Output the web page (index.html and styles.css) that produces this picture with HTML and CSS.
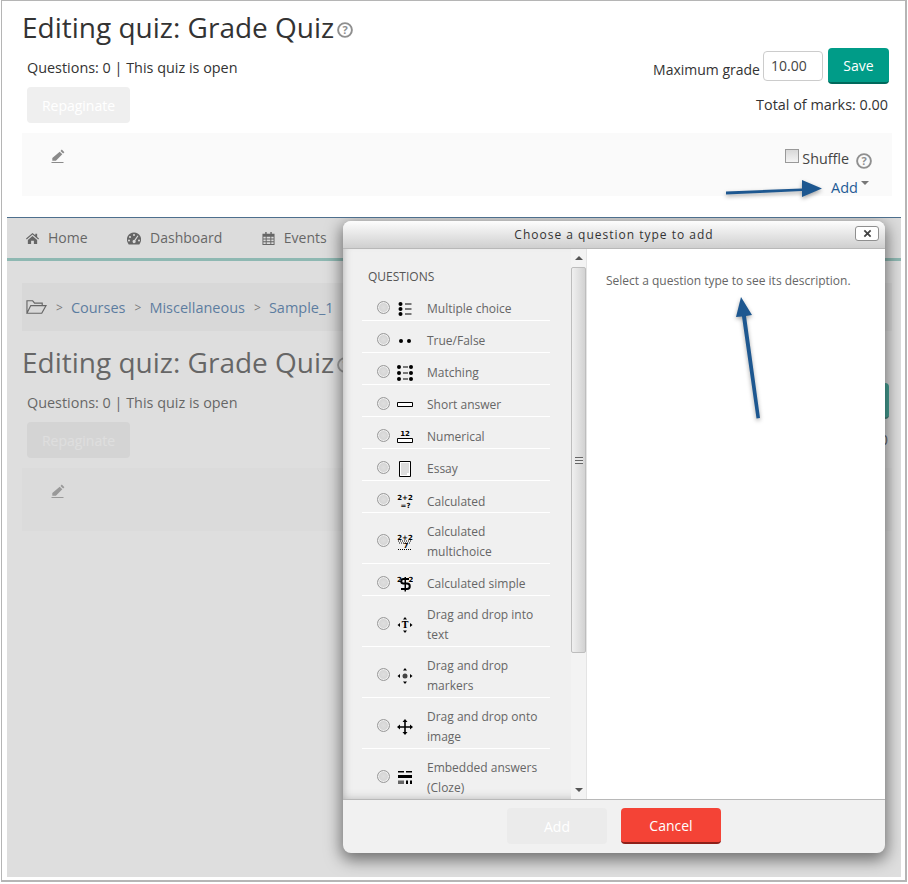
FILE: index.html
```html
<!DOCTYPE html>
<html lang="en">
<head>
    <meta charset="UTF-8"/>
    <title>Editing quiz: Grade Quiz</title>
    <link rel="stylesheet" href="styles.css">
</head>
<body>
<div class="sheet">
    <div class="top">
        <div class="quiz">
            <div class="quiz-head">
                <div class="quiz-left">
                    <h1>Editing quiz: Grade Quiz <svg class="help-big" viewBox="0 0 16 16"><circle cx="8" cy="8" r="6.900"/><text x="8" y="11.900">?</text></svg></h1>
                    <div class="status">Questions: 0 | This quiz is open</div>
                    <button class="btn btn-off repag">Repaginate</button>
                </div>
                <div class="quiz-right">
                    <div class="grade-row">
                        <span class="grade-label">Maximum grade</span>
                        <input class="grade" type="text" value="10.00">
                        <button class="btn btn-save">Save</button>
                    </div>
                    <div class="marks">Total of marks: 0.00</div>
                </div>
            </div>
            <div class="panel">
                <svg class="pencil" viewBox="0 0 14 14"><path d="M10.800.600l2.600 2.600-1.300 1.300-2.600-2.600zM8.700 2.700l2.600 2.600-6.400 6.400H1.300V9.100zM.500 13h12v1H.500z"/></svg>
                <div class="panel-right">
                    <div class="shuffle-row">
                        <input class="check" type="checkbox">
                        <span class="shuffle">Shuffle</span>
                        <svg class="help" viewBox="0 0 16 16"><circle cx="8" cy="8" r="6.900"/><text x="8" y="11.900">?</text></svg>
                    </div>
                    <div class="add-row"><a class="add-link">Add</a><span class="caret"></span></div>
                </div>
            </div>
        </div>
    </div>

    <div class="shot">
        <div class="nav">
            <span class="nav-item"><svg viewBox="0 0 14 12"><path d="M7 0L0 6l.8 1L7 1.800 13.200 7l.8-1-2-1.700V.800h-2v1.800zM2 7.500V12h3.500V8.500h3V12H12V7.500L7 3.300z"/></svg>Home</span>
            <span class="nav-item"><svg class="wide" viewBox="0 0 14 12"><path fill-rule="evenodd" d="M7 0a7 7 0 0 0-6 10.700l.7 1.300h10.600l.7-1.300A7 7 0 0 0 7 0zM7 1.500a1 1 0 1 1 0 2 1 1 0 0 1 0-2zM3 3.500a1 1 0 1 1 0 2 1 1 0 0 1 0-2zM2 7a1 1 0 1 1 0 2 1 1 0 0 1 0-2zM12 7a1 1 0 1 1 0 2 1 1 0 0 1 0-2zM10.500 3l.9.500L8.300 8.200a1.500 1.500 0 1 1-1-.6z"/></svg>Dashboard</span>
            <span class="nav-item"><svg viewBox="0 0 13 14"><path fill-rule="evenodd" d="M3 0h1.500v2h4V0H10v2h3v12H0V2h3zM1 5v2h2.500V5zM4.500 5v2h4V5zM9.500 5v2H12V5zM1 8v2h2.500V8zM4.500 8v2h4V8zM9.500 8v2H12V8zM1 11v2h2.500v-2zM4.500 11v2h4v-2zM9.500 11v2H12v-2z"/></svg>Events</span>
        </div>
        <div class="crumbs">
            <svg class="folder" viewBox="0 0 22 16"><path d="M1 14.500V1.500h6l2 2.500h8v2.500M1 14.500h15.500L21 6.500H5z"/></svg>
            <span class="sep">&gt;</span><a>Courses</a>
            <span class="sep">&gt;</span><a>Miscellaneous</a>
            <span class="sep">&gt;</span><a>Sample_1</a>
        </div>
        <div class="quiz">
            <div class="quiz-head">
                <div class="quiz-left">
                    <h1>Editing quiz: Grade Quiz <svg class="help-big" viewBox="0 0 16 16"><circle cx="8" cy="8" r="6.900"/><text x="8" y="11.900">?</text></svg></h1>
                    <div class="status">Questions: 0 | This quiz is open</div>
                    <button class="btn btn-off repag">Repaginate</button>
                </div>
                <div class="quiz-right">
                    <div class="grade-row">
                        <span class="grade-label">Maximum grade</span>
                        <input class="grade" type="text" value="10.00">
                        <button class="btn btn-save">Save</button>
                    </div>
                    <div class="marks">Total of marks: 0.00</div>
                </div>
            </div>
            <div class="panel">
                <svg class="pencil" viewBox="0 0 14 14"><path d="M10.800.600l2.600 2.600-1.300 1.300-2.600-2.600zM8.700 2.700l2.600 2.600-6.400 6.400H1.300V9.100zM.500 13h12v1H.500z"/></svg>
            </div>
        </div>
        <div class="backdrop"></div>

        <div class="modal">
            <div class="modal-title">
                <span>Choose a question type to add</span>
                <button class="close"><svg viewBox="0 0 10 10"><path d="M1.500 1.500l7 7M8.500 1.500l-7 7"/></svg></button>
            </div>
            <div class="modal-body">
                <div class="types">
                    <div class="types-label">QUESTIONS</div>
                    <label class="type"><input type="radio" name="q">
                        <svg class="qicon" viewBox="0 0 16 16"><circle cx="3.500" cy="3" r="2"/><circle cx="3.500" cy="8" r="2"/><circle cx="3.500" cy="13" r="2"/><path d="M8 2.500h6.500v1H8zM8 7.500h6.500v1H8zM8 12.500h6.500v1H8z"/></svg>
                        <span>Multiple choice</span></label>
                    <label class="type"><input type="radio" name="q">
                        <svg class="qicon" viewBox="0 0 16 16"><circle cx="4" cy="8" r="2"/><circle cx="12" cy="8" r="2"/></svg>
                        <span>True/False</span></label>
                    <label class="type"><input type="radio" name="q">
                        <svg class="qicon" viewBox="0 0 16 16"><circle cx="2" cy="2" r="2"/><circle cx="2" cy="8" r="2"/><circle cx="2" cy="14" r="2"/><circle cx="14" cy="2" r="2"/><circle cx="14" cy="8" r="2"/><circle cx="14" cy="14" r="2"/><path d="M6 1.500h5v1H6zM6 7.500h5v1H6zM6 13.500h5v1H6z"/></svg>
                        <span>Matching</span></label>
                    <label class="type"><input type="radio" name="q">
                        <svg class="qicon" viewBox="0 0 16 16"><path d="M.500 5.500h15v4H.500z" fill="#fff" stroke="#000"/></svg>
                        <span>Short answer</span></label>
                    <label class="type"><input type="radio" name="q">
                        <svg class="qicon" viewBox="0 0 16 16"><text class="tiny" x="8" y="7">12</text><path d="M.500 9.500h15v4H.500z" fill="#fff" stroke="#000"/></svg>
                        <span>Numerical</span></label>
                    <label class="type"><input type="radio" name="q">
                        <svg class="qicon" viewBox="0 0 16 16"><path d="M2.500.500h11v15h-11z" fill="#fff" stroke="#000"/><path d="M4.500 3h7M4.500 5h7M4.500 7h7M4.500 9h7M4.500 11h7M4.500 13h5" stroke="#777" stroke-dasharray="1 1"/></svg>
                        <span>Essay</span></label>
                    <label class="type low"><input type="radio" name="q">
                        <svg class="qicon" viewBox="0 0 16 16"><text class="tiny" x="8" y="6.500">2+2</text><text class="tiny" x="8.500" y="14.500">=?</text></svg>
                        <span>Calculated</span></label>
                    <label class="type"><input type="radio" name="q">
                        <svg class="qicon" viewBox="0 0 16 16"><text class="tiny" x="8" y="5.500">2+2</text><path d="M1 7h14M2 9h12M1 15.500h14" stroke="#000" stroke-dasharray="1 1"/><text class="tiny" x="9" y="14">7</text></svg>
                        <span>Calculated multichoice</span></label>
                    <label class="type"><input type="radio" name="q">
                        <svg class="qicon" viewBox="0 0 16 16"><text class="tiny" x="2.500" y="6">2</text><text class="tiny" x="14" y="6">2</text><path d="M12 3H6.500a2.200 2.200 0 0 0 0 4.500h3.500a2.700 2.700 0 0 1 0 5.500H4" fill="none" stroke="#000" stroke-width="2"/><path d="M7.500 1h1.500v14.500H7.500z"/></svg>
                        <span>Calculated simple</span></label>
                    <label class="type"><input type="radio" name="q">
                        <svg class="qicon" viewBox="0 0 16 16"><path d="M8 0l2 2.500H6zM8 16l2-2.500H6zM0.500 8l2.500-2v4zM15.500 8L13 6v4z"/><text class="tiny bold" x="8" y="11">T</text></svg>
                        <span>Drag and drop into text</span></label>
                    <label class="type"><input type="radio" name="q">
                        <svg class="qicon" viewBox="0 0 16 16"><path d="M8 0l2 2.500H6zM8 16l2-2.500H6zM0.500 8l2.500-2v4zM15.500 8L13 6v4z"/><circle cx="8" cy="8" r="2.500" fill="#444"/></svg>
                        <span>Drag and drop markers</span></label>
                    <label class="type"><input type="radio" name="q">
                        <svg class="qicon" viewBox="0 0 16 16"><path d="M7.200 3H5.500L8 0l2.500 3H8.800v4.200H13V5.500L16 8l-3 2.500V8.800H8.800V13h1.700L8 16l-2.500-3h1.700V8.800H3v1.700L0 8l3-2.500v1.700h4.200z"/></svg>
                        <span>Drag and drop onto image</span></label>
                    <label class="type"><input type="radio" name="q">
                        <svg class="qicon" viewBox="0 0 16 16"><path d="M1 1h6v1.500H1zM9 1h6v1.500H9zM1 5h14v3H1z"/><path d="M1 10.500h6v3.500H1z" fill="#666"/><path d="M9 10.500h2V14H9zM13 10.500h2V14h-2z"/></svg>
                        <span>Embedded answers (Cloze)</span></label>
                </div>
                <div class="scroll">
                    <div class="scroll-btn"><span class="arrow-up"></span></div>
                    <div class="thumb"><span class="grip"></span></div>
                    <div class="scroll-track"></div>
                    <div class="scroll-btn"><span class="arrow-down"></span></div>
                </div>
                <div class="desc">Select a question type to see its description.</div>
            </div>
            <div class="modal-foot">
                <button class="btn btn-off foot-btn">Add</button>
                <button class="btn btn-cancel foot-btn">Cancel</button>
            </div>
        </div>
    </div>
</div>

<svg class="arrows" viewBox="0 0 908 884">
    <path d="M726 191.500L802 188.500V180L822 188.500 802 197V191L726 194.500z"/>
    <path d="M760 418L756.500 418.500 742 316.500 736 317 741 297 752 315 746 316z"/>
</svg>
</body>
</html>
```
FILE: styles.css
```css
*{box-sizing: border-box; margin: 0; padding: 0}
body{position: relative; width: 908px; height: 884px; background: #fff; font-family: "Open Sans", "Liberation Sans", sans-serif; font-size: 14px; color: #333; overflow: hidden}

.sheet{margin-left: 1px; width: 906px; height: 882px; border: 1px solid #b5b5b5; border-right-width: 2px; border-bottom-width: 2px; padding: 0 4px 3px 5px; display: flex; flex-direction: column}
.top{height: 216px; flex: none}
.quiz{margin-left: 15px; width: 870px}
.quiz-head{display: flex; justify-content: space-between; height: 132px}
.quiz-left{padding-top: 7px}
h1{font-size: 28px; font-weight: 400; line-height: 38px; color: #333; white-space: nowrap}
.help-big{width: 16px; height: 16px; margin-left: -4px; vertical-align: 0}
.help-big circle, .help circle{fill: none; stroke: #8f8f8f; stroke-width: 1.900}
.help-big text, .help text{font-size: 11px; font-weight: 700; fill: #8f8f8f; text-anchor: middle}
.status{margin: 12px 0 0 5px; font-size: 14.400px; line-height: 20px; white-space: nowrap}
.btn{border: 0; border-radius: 4px; font-family: inherit; font-size: 14px; color: #fff}
.btn-off{background: #efefef}
.repag{display: block; margin: 9px 0 0 5px; width: 103px; height: 36px}

.quiz-right{padding: 47px 3px 0 0; display: flex; flex-direction: column; align-items: flex-end}
.grade-row{display: flex; align-items: flex-start}
.grade-label{margin: 12px 3px 0 0; line-height: 20px}
.grade{width: 60px; height: 30px; margin-top: 3px; border: 1px solid #ccc; border-radius: 4px; padding: 0 0 1px 7px; font-family: inherit; font-size: 14px; color: #444}
.btn-save{margin-left: 5px; width: 61px; height: 36px; background: #009c88; border-bottom: 2px solid #00695c}
.marks{margin-top: 11px; font-size: 14.400px; line-height: 20px; margin-right: 1px}

.panel{height: 63px; background: #fafafa; display: flex; justify-content: space-between; padding: 16px 20px 0 29px}
.pencil{width: 14px; height: 14px; fill: #8a8a8a}
.panel-right{display: flex; flex-direction: column; align-items: flex-end}
.shuffle-row{display: flex; align-items: flex-start; flex: none; height: 29px}
.check{appearance: none; width: 14px; height: 14px; border: 1px solid #999; background: linear-gradient(#d8d8d8, #f4f4f4)}
.shuffle{margin-left: 3px; line-height: 20px; font-size: 14.300px; color: #444}
.help{width: 16px; height: 16px; margin: 4px 0 0 7px}
.add-row{display: flex; align-items: flex-start; flex: none; padding-right: 3px}
.add-link{color: #1f5a96; line-height: 20px; font-size: 14.500px}
.caret{margin: 3px 0 0 3px; border: 4px solid transparent; border-top-color: #777; border-bottom: 0}

.shot{position: relative; height: 660px; border-top: 1px solid #4d6f8d; overflow: hidden; flex: none}
.nav{display: flex; height: 43px; background: #fbfbfb; border-bottom: 3px solid #78bfb5; padding-left: 19px; gap: 39.500px}
.nav-item{display: flex; align-items: center; gap: 9px; line-height: 40px; color: #333}
.nav-item svg{width: 13px; height: 13px; fill: #333}
.nav-item svg.wide{width: 14px}
.crumbs{display: flex; align-items: center; margin: 22px 0 5px 15px; width: 870px; height: 48px; background: #f5f5f5; padding-left: 4px; gap: 8px; font-size: 14.500px}
.folder{width: 21px; height: 16px; fill: none; stroke: #333; stroke-width: 1.200}
.crumbs a{color: #1f5a96}
.sep{color: #555; font-size: 12px; margin-left: 1px}
.backdrop{position: absolute; inset: 0; background: rgba(175, 175, 175, .41)}

.modal{position: absolute; left: 336px; top: 3px; width: 542px; height: 632px; border-radius: 8px; background: #f1f1f1; box-shadow: 0 5px 16px 2px rgba(0, 0, 0, .5); display: flex; flex-direction: column; overflow: hidden}
.modal-title{position: relative; height: 28px; flex: none; background: linear-gradient(#fdfdfd, #cfcfcf); border-bottom: 1px solid #b8b8b8; text-align: center; font-size: 12px; letter-spacing: 1px; line-height: 28px; color: #333}
.close{position: absolute; right: 6px; top: 5px; width: 24px; height: 15px; background: #fff; border: 1px solid #8f8f8f; border-radius: 3px; display: flex; align-items: center; justify-content: center}
.close svg{width: 9px; height: 9px; fill: none; stroke: #444; stroke-width: 2}

.modal-body{flex: 1; min-height: 0; display: flex; background: #fff}
.types{width: 228px; flex: none; padding: 0 0 0 19px; background: #f0f0f0; box-shadow: inset 7px 0 8px -7px #aaa, inset 0 -10px 10px -10px #bbb; overflow: hidden}
.types-label{height: 40px; padding: 18px 0 0 6px; font-size: 12px; line-height: 20px; color: #555}
.type{display: flex; align-items: center; width: 188px; min-height: 32px; padding: 9px 8px 1px 15px; border-bottom: 1px solid #fff; line-height: 20px; font-size: 12px; color: #666}
.type.low span{position: relative; top: 1px}
.type input{appearance: none; width: 13px; height: 13px; flex: none; margin: -3px -1px 0 0; border: 1px solid #999; border-radius: 50%; background: radial-gradient(#dedede, #cfcfcf); box-shadow: inset 0 0 0 1px #f0f0f0}
.qicon{width: 16px; height: 16px; flex: none; margin: 0 14px 0 8px}
.tiny{font-family: "DejaVu Sans", sans-serif; font-size: 7px; font-weight: 700; text-anchor: middle}
.bold{font-size: 9px; font-family: "DejaVu Serif", serif}

.scroll{width: 16px; flex: none; display: flex; flex-direction: column; background: #f3f3f3; border-right: 1px solid #e4e4e4}
.scroll-btn{height: 18px; flex: none; display: flex; align-items: center; justify-content: center}
.arrow-up{border: 4px solid transparent; border-bottom-color: #555; border-top: 0}
.arrow-down{border: 4px solid transparent; border-top-color: #555; border-bottom: 0}
.thumb{height: 386px; flex: none; border: 1px solid #bdbdbd; border-radius: 2px; background: linear-gradient(90deg, #f0f0f0, #d2d2d2); display: flex; align-items: center; justify-content: center}
.grip{width: 8px; height: 7px; background: repeating-linear-gradient(#666 0, #666 1px, #e8e8e8 1px, #e8e8e8 3px)}
.scroll-track{flex: 1}
.desc{padding: 22px 0 0 19px; font-size: 12px; line-height: 20px; color: #666; white-space: nowrap}

.modal-foot{height: 54px; flex: none; border-top: 1px solid #b8b8b8; display: flex; justify-content: center; align-items: flex-start; gap: 14px; padding-top: 8px}
.foot-btn{width: 100px; height: 36px}
.modal-foot .btn-off{background: #ebebeb}
.btn-cancel{background: #f44336; border-bottom: 2px solid #8e1f18}

.arrows{position: absolute; left: 0; top: 0; width: 908px; height: 884px; fill: #1d5790; filter: drop-shadow(0 2px 2px rgba(0, 0, 0, .35)); pointer-events: none}
```
